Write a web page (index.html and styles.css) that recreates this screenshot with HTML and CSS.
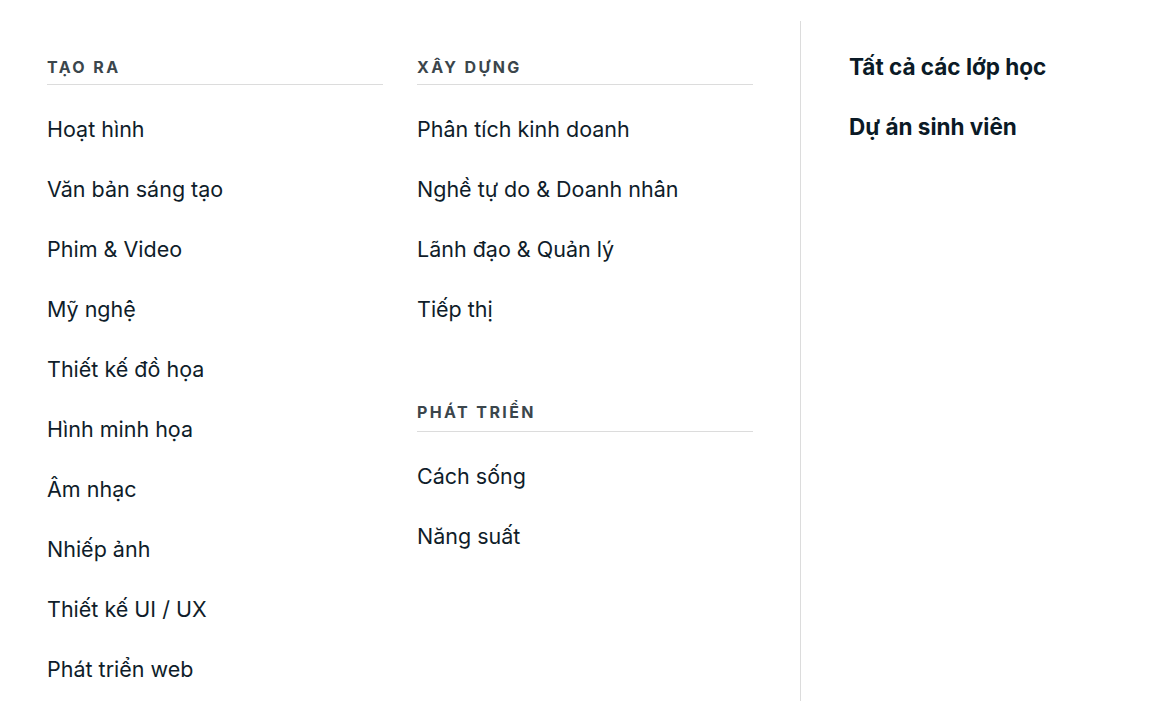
FILE: index.html
```html
<!DOCTYPE html>
<html lang="vi">
<head>
<meta charset="utf-8">
<title>Menu</title>
<link rel="stylesheet" href="styles.css">
</head>
<body>
<div class="menu">
  <div class="categories">
    <div class="col">
      <div class="group">
        <h3 class="heading">Tạo ra</h3>
        <ul class="list">
          <li>Hoạt hình</li>
          <li>Văn bản sáng tạo</li>
          <li>Phim &amp; Video</li>
          <li>Mỹ nghệ</li>
          <li>Thiết kế đồ họa</li>
          <li>Hình minh họa</li>
          <li>Âm nhạc</li>
          <li>Nhiếp ảnh</li>
          <li>Thiết kế UI / UX</li>
          <li>Phát triển web</li>
        </ul>
      </div>
    </div>
    <div class="col">
      <div class="group">
        <h3 class="heading">Xây dựng</h3>
        <ul class="list">
          <li>Phân tích kinh doanh</li>
          <li>Nghề tự do &amp; Doanh nhân</li>
          <li>Lãnh đạo &amp; Quản lý</li>
          <li>Tiếp thị</li>
        </ul>
      </div>
      <div class="group group-next">
        <h3 class="heading">Phát triển</h3>
        <ul class="list">
          <li>Cách sống</li>
          <li>Năng suất</li>
        </ul>
      </div>
    </div>
  </div>
  <div class="side">
    <ul class="side-list">
      <li>Tất cả các lớp học</li>
      <li>Dự án sinh viên</li>
    </ul>
  </div>
</div>
</body>
</html>
```

FILE: styles.css
```css
* { box-sizing: border-box; }
html, body { margin: 0; padding: 0; background: #fff; }
body {
  font-family: Inter, "Noto Sans", "Liberation Sans", sans-serif;
  color: #0f1d2a;
}
.menu {
  display: flex;
  padding: 21px 0 20px;
  height: 721px;
}
.categories {
  display: flex;
  gap: 34px;
  padding: 36px 47px 0 47px;
  width: 800px;
}
.col { width: 336px; }
.heading {
  margin: 0;
  font-size: 16px;
  line-height: 20px;
  font-weight: 700;
  letter-spacing: 2.4px;
  text-transform: uppercase;
  color: #3b464c;
  padding-bottom: 7px;
  border-bottom: 1px solid #dcdcdc;
}
.list {
  list-style: none;
  margin: 0;
  padding: 14px 0 0;
}
.list li {
  font-size: 21.5px;
  line-height: 60px;
  height: 60px;
}
.group-next { margin-top: 63px; }
.group-next .heading { padding-bottom: 9px; }
.group-next .list { padding-top: 14px; }
.side {
  border-left: 1px solid #dcdcdc;
  padding: 16px 0 0 48px;
  flex: 1;
}
.side-list {
  list-style: none;
  margin: 0;
  padding: 0;
}
.side-list li {
  font-size: 22.5px;
  font-weight: 700;
  line-height: 60px;
  color: #0b1a26;
}
```
